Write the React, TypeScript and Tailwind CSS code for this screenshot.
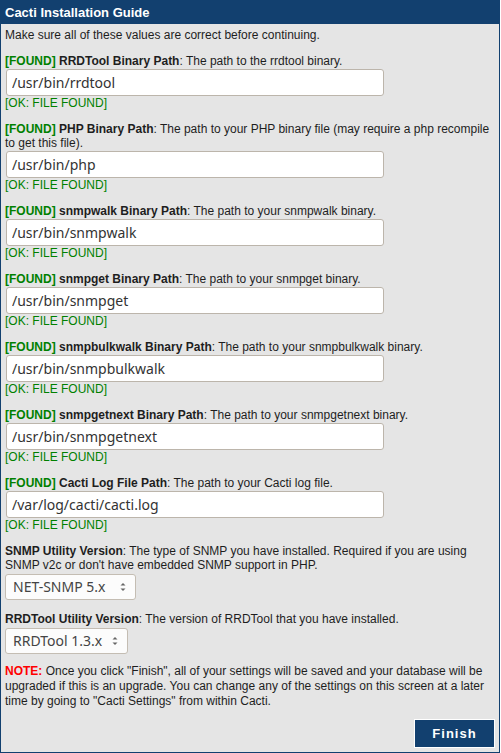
import React from "react";

const paths = [
  { name: "RRDTool Binary Path", desc: "The path to the rrdtool binary.", value: "/usr/bin/rrdtool" },
  {
    name: "PHP Binary Path",
    desc: "The path to your PHP binary file (may require a php recompile to get this file).",
    value: "/usr/bin/php",
  },
  { name: "snmpwalk Binary Path", desc: "The path to your snmpwalk binary.", value: "/usr/bin/snmpwalk" },
  { name: "snmpget Binary Path", desc: "The path to your snmpget binary.", value: "/usr/bin/snmpget" },
  { name: "snmpbulkwalk Binary Path", desc: "The path to your snmpbulkwalk binary.", value: "/usr/bin/snmpbulkwalk" },
  { name: "snmpgetnext Binary Path", desc: "The path to your snmpgetnext binary.", value: "/usr/bin/snmpgetnext" },
  { name: "Cacti Log File Path", desc: "The path to your Cacti log file.", value: "/var/log/cacti/cacti.log" },
];

const Spinner = () => (
  <svg width="8" height="12" viewBox="0 0 8 12" className="absolute right-[9px] top-1/2 -translate-y-1/2 pointer-events-none">
    <path d="M1.5 4.5 L4 2 L6.5 4.5 Z" fill="#666" />
    <path d="M1.5 7.5 L4 10 L6.5 7.5 Z" fill="#666" />
  </svg>
);

const VersionSelect = ({ options, width }: { options: string[]; width: string }) => (
  <div className={`relative mt-[2px] ${width}`}>
    <select
      defaultValue={options[0]}
      className="appearance-none w-full h-[26px] pl-[7px] pr-[20px] rounded-[3px] border border-[#c4bdb3] bg-[#fcfcfc] text-[#444] text-[14px] font-['Noto_Sans',sans-serif] outline-none"
    >
      {options.map((o, i) => (
        <option key={i}>{o}</option>
      ))}
    </select>
    <Spinner />
  </div>
);

const App = () => {
  return (
    <div className="w-[501px] bg-white font-['Liberation_Sans',Arial,sans-serif] text-[12px] leading-[14px] text-[#1e1e1e]">
      <div className="w-[500px] border border-[#12406f] bg-[#e5e5e5]">
        {/* Header */}
        <div className="h-[23px] bg-[#12406f] px-[4px] flex items-center text-white font-bold text-[13px]">
          Cacti Installation Guide
        </div>

        <div className="px-[4px] pt-[4px] pb-[4px]">
          <p className="mb-[12px]">Make sure all of these values are correct before continuing.</p>

          {/* Binary paths */}
          {paths.map((p) => (
            <div key={p.name} className="mb-[12px]">
              <p>
                <span className="font-bold text-[#008000]">[FOUND]</span>{" "}
                <span className="font-bold">{p.name}</span>: {p.desc}
              </p>
              <input
                defaultValue={p.value}
                className="block mt-[1px] ml-[1px] w-[378px] h-[27px] px-[5px] rounded-[3px] border border-[#bcb5ab] bg-white text-[#333] text-[14px] font-['Noto_Sans',sans-serif] outline-none"
              />
              <p className="text-[#008000]">[OK: FILE FOUND]</p>
            </div>
          ))}

          {/* SNMP version */}
          <div className="mb-[12px]">
            <p>
              <span className="font-bold">SNMP Utility Version</span>: The type of SNMP you have installed. Required if
              you are using SNMP v2c or don't have embedded SNMP support in PHP.
            </p>
            <VersionSelect options={["NET-SNMP 5.x", "UCD-SNMP 4.x"]} width="w-[131px]" />
          </div>

          {/* RRDTool version */}
          <div className="mb-[10px]">
            <p>
              <span className="font-bold">RRDTool Utility Version</span>: The version of RRDTool that you have installed.
            </p>
            <VersionSelect options={["RRDTool 1.3.x", "RRDTool 1.0.x", "RRDTool 1.2.x"]} width="w-[123px]" />
          </div>

          <p className="leading-[15px]">
            <span className="font-bold text-[#ff0000]">NOTE:</span> Once you click "Finish", all of your settings will be
            saved and your database will be upgraded if this is an upgrade. You can change any of the settings on this
            screen at a later time by going to "Cacti Settings" from within Cacti.
          </p>

          <div className="flex justify-end mt-[10px]">
            <button className="w-[81px] h-[29px] bg-[#12406f] border border-white text-white font-bold text-[13px] tracking-[1px]">
              Finish
            </button>
          </div>
        </div>
      </div>
    </div>
  );
};

export default App;
